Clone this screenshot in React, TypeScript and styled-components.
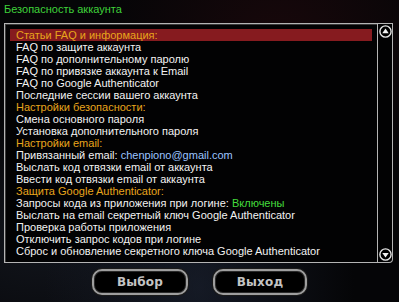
import React from 'react';
import styled, { createGlobalStyle } from 'styled-components';

const GlobalStyle = createGlobalStyle`
  html, body {
    margin: 0;
    padding: 0;
    background: #050507;
  }
`;

const Page = styled.div`
  width: 399px;
  height: 302px;
  overflow: hidden;
  box-sizing: border-box;
  padding: 3px 6px 0 4px;
  display: flex;
  flex-direction: column;
  font-family: 'Liberation Sans', Arial, sans-serif;
  font-size: 11px;
  background:
    radial-gradient(ellipse at 70% 15%, rgba(40, 10, 14, 0.55), transparent 45%),
    radial-gradient(ellipse at 50% 95%, rgba(30, 38, 55, 0.6), transparent 55%),
    radial-gradient(ellipse at 10% 80%, rgba(30, 36, 48, 0.5), transparent 40%),
    #050507;
`;

const Title = styled.div`
  color: #3fd23a;
  height: 13px;
  line-height: 13px;
`;

const Frame = styled.div`
  margin-top: 7px;
  display: flex;
  height: 240px;
`;

const List = styled.div`
  flex: 1;
  box-sizing: border-box;
  border: 1px solid #b4b4b4;
  box-shadow: inset 1px 1px 0 #3a3a3a;
  background: #020203;
  padding: 5px 5px 0 5px;
  display: flex;
  flex-direction: column;
`;

const Row = styled.div<{ $tone: 'item' | 'head'; $selected?: boolean }>`
  height: 12px;
  line-height: 12px;
  padding-left: 6px;
  white-space: nowrap;
  color: ${(p) => (p.$tone === 'head' ? '#e8a51c' : '#f2f2f2')};
  background: ${(p) => (p.$selected ? '#861b1f' : 'transparent')};
`;

const Email = styled.span`
  color: #9cc4ff;
`;

const Enabled = styled.span`
  color: #44dc3c;
`;

const Scroll = styled.div`
  width: 15px;
  box-sizing: border-box;
  border: 1px solid #b4b4b4;
  border-left: none;
  border-radius: 0 0 4px 0;
  display: flex;
  flex-direction: column;
  justify-content: space-between;
  align-items: center;
  padding: 1px 0;
  background: #020203;
`;

const ButtonBar = styled.div`
  margin-top: 6px;
  display: flex;
  justify-content: center;
  gap: 25px;
  padding-left: 2px;
`;

const Button = styled.div<{ $w: number }>`
  width: ${(p) => p.$w}px;
  height: 26px;
  box-sizing: border-box;
  border: 2px solid #9e9e9e;
  border-radius: 10px;
  box-shadow: inset 0 0 0 1px #2a2a2a, 0 0 0 1px #1a1a1a;
  background: #000;
  display: flex;
  align-items: center;
  justify-content: center;
  color: #c4c4c4;
  font-family: 'DejaVu Sans', sans-serif;
  font-weight: bold;
  font-size: 12px;
  letter-spacing: 0.2px;
`;

const Arrow: React.FC<{ down?: boolean }> = ({ down }) => (
  <svg width="13" height="13" viewBox="0 0 13 13">
    <circle cx="6.5" cy="6.5" r="5.6" fill="#000" stroke="#e6e6e6" strokeWidth="1.4" />
    {down ? (
      <path d="M3.3 5 L9.7 5 L6.5 9.6 Z" fill="#f2f2f2" />
    ) : (
      <path d="M3.3 8.2 L9.7 8.2 L6.5 3.5 Z" fill="#f2f2f2" />
    )}
  </svg>
);

type Item = { text: React.ReactNode; tone: 'item' | 'head' };

const items: Item[] = [
  { text: 'Статьи FAQ и информация:', tone: 'head' },
  { text: 'FAQ по защите аккаунта', tone: 'item' },
  { text: 'FAQ по дополнительному паролю', tone: 'item' },
  { text: 'FAQ по привязке аккаунта к Email', tone: 'item' },
  { text: 'FAQ по Google Authenticator', tone: 'item' },
  { text: 'Последние сессии вашего аккаунта', tone: 'item' },
  { text: 'Настройки безопасности:', tone: 'head' },
  { text: 'Смена основного пароля', tone: 'item' },
  { text: 'Установка дополнительного пароля', tone: 'item' },
  { text: 'Настройки email:', tone: 'head' },
  {
    text: (
      <>
        Привязанный email: <Email>chenpiono@gmail.com</Email>
      </>
    ),
    tone: 'item',
  },
  { text: 'Выслать код отвязки email от аккаунта', tone: 'item' },
  { text: 'Ввести код отвязки email от аккаунта', tone: 'item' },
  { text: 'Защита Google Authenticator:', tone: 'head' },
  {
    text: (
      <>
        Запросы кода из приложения при логине: <Enabled>Включены</Enabled>
      </>
    ),
    tone: 'item',
  },
  { text: 'Выслать на email секретный ключ Google Authenticator', tone: 'item' },
  { text: 'Проверка работы приложения', tone: 'item' },
  { text: 'Отключить запрос кодов при логине', tone: 'item' },
  { text: 'Сброс и обновление секретного ключа Google Authenticator', tone: 'item' },
];

const App: React.FC = () => (
  <>
    <GlobalStyle />
    <Page>
      <Title>Безопасность аккаунта</Title>
      <Frame>
        <List>
          {items.map((it, i) => (
            <Row key={i} $tone={it.tone} $selected={i === 0}>
              {it.text}
            </Row>
          ))}
        </List>
        <Scroll>
          <Arrow />
          <Arrow down />
        </Scroll>
      </Frame>
      <ButtonBar>
        <Button $w={96}>Выбор</Button>
        <Button $w={94}>Выход</Button>
      </ButtonBar>
    </Page>
  </>
);

export default App;
